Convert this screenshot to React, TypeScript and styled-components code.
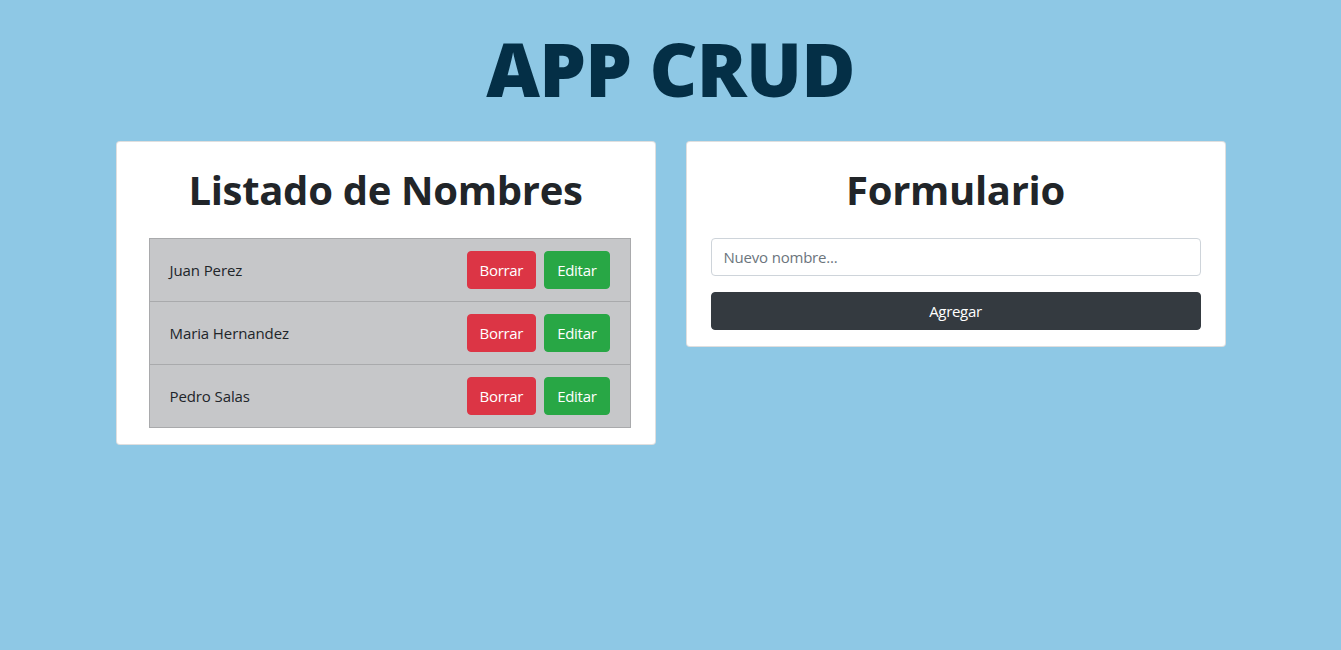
import React from "react";
import styled, { createGlobalStyle } from "styled-components";

const Global = createGlobalStyle`
  html, body { margin: 0; padding: 0; }
  body {
    background: #8ec8e5;
    font-family: "Open Sans", "Noto Sans", sans-serif;
    color: #212529;
    font-size: 16px;
    line-height: 1.5;
  }
  * { box-sizing: border-box; }
`;

const Page = styled.div`
  width: 1110px;
  margin: 0 auto;
  padding: 21px 0 0;
`;

const Title = styled.h1`
  margin: 0 0 24px;
  text-align: center;
  font-size: 74px;
  font-weight: 800;
  line-height: 1.3;
  letter-spacing: -0.8px;
  color: #042f46;
`;

const Columns = styled.div`
  display: grid;
  grid-template-columns: 1fr 1fr;
  column-gap: 30px;
  align-items: start;
`;

const Card = styled.section`
  background: #fff;
  border: 1px solid rgba(0, 0, 0, 0.125);
  border-radius: 4px;
  padding: 24px 24px 16px;
`;

const CardTitle = styled.h2`
  margin: 0 0 24px;
  text-align: center;
  font-size: 40px;
  font-weight: 700;
  line-height: 48px;
  letter-spacing: -0.3px;
  color: #212529;
`;

const List = styled.ul`
  list-style: none;
  margin: 0 0 0 8px;
  padding: 0;
  border: 1px solid #a9aaac;
`;

const Item = styled.li`
  display: flex;
  align-items: center;
  justify-content: space-between;
  padding: 12px 20px;
  background: #c6c7c9;
  & + & { border-top: 1px solid #a9aaac; }
`;

const Name = styled.span`
  font-size: 15px;
  color: #212529;
  letter-spacing: -0.1px;
`;

const Actions = styled.div`
  display: flex;
  gap: 8px;
`;

const Btn = styled.button<{ $bg: string; $block?: boolean }>`
  font-family: inherit;
  font-size: 15px;
  letter-spacing: -0.3px;
  line-height: 24px;
  height: 38px;
  padding: 6px 12px;
  border: 1px solid ${(p) => p.$bg};
  border-radius: 4px;
  background: ${(p) => p.$bg};
  color: #fff;
  cursor: pointer;
  width: ${(p) => (p.$block ? "100%" : "auto")};
  display: block;
`;

const Input = styled.input`
  display: block;
  width: 100%;
  height: 38px;
  padding: 6px 12px;
  font-family: inherit;
  font-size: 15px;
  letter-spacing: -0.2px;
  color: #495057;
  border: 1px solid #ced4da;
  border-radius: 4px;
  margin: 0 0 16px;
  &::placeholder { color: #6c757d; }
`;

const names = ["Juan Perez", "Maria Hernandez", "Pedro Salas"];

export default function App() {
  return (
    <>
      <Global />
      <Page>
        <Title>APP CRUD</Title>
        <Columns>
          <Card>
            <CardTitle>Listado de Nombres</CardTitle>
            <List>
              {names.map((n) => (
                <Item key={n}>
                  <Name>{n}</Name>
                  <Actions>
                    <Btn $bg="#dc3545">Borrar</Btn>
                    <Btn $bg="#28a745">Editar</Btn>
                  </Actions>
                </Item>
              ))}
            </List>
          </Card>
          <Card>
            <CardTitle>Formulario</CardTitle>
            <Input placeholder="Nuevo nombre..." />
            <Btn $bg="#343a40" $block>Agregar</Btn>
          </Card>
        </Columns>
      </Page>
    </>
  );
}
